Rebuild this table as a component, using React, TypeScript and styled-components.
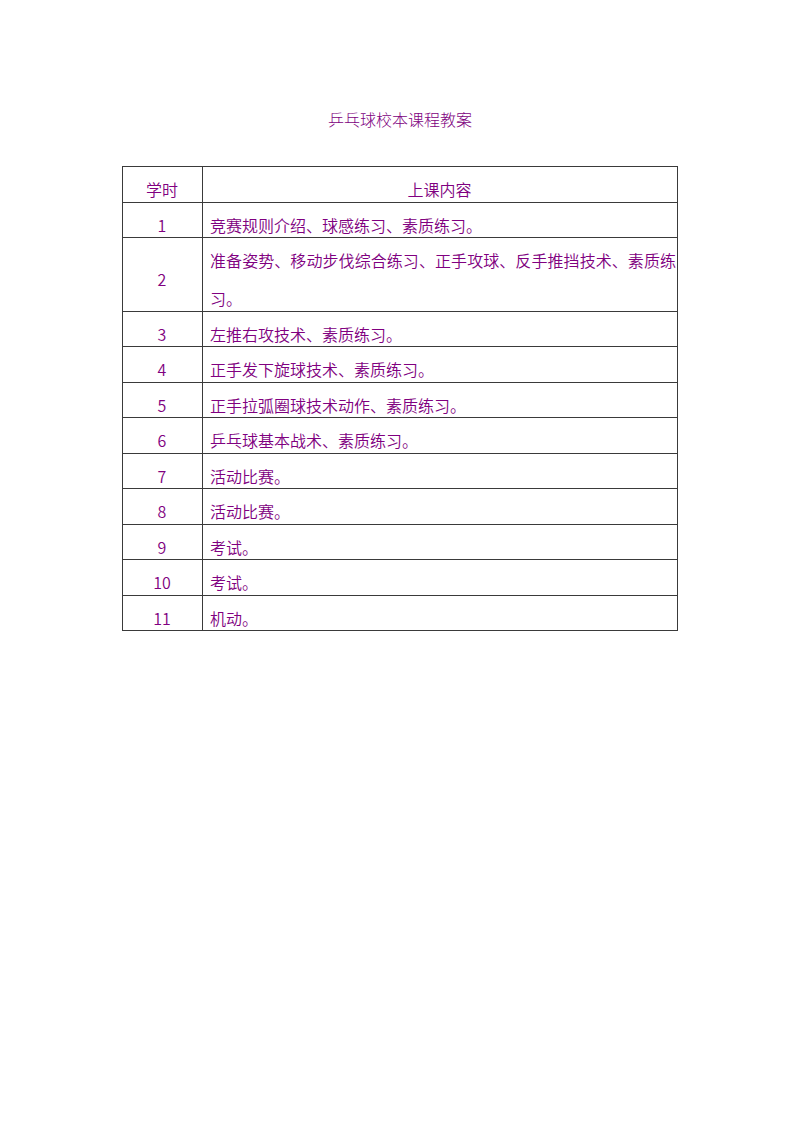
import styled, { createGlobalStyle } from "styled-components";

const GlobalStyle = createGlobalStyle`
  html, body {
    margin: 0;
    padding: 0;
    background: #fff;
  }
  body {
    font-family: "Noto Sans CJK SC", "Noto Sans", sans-serif;
    color: #800080;
  }
`;

const Page = styled.div`
  width: 800px;
  min-height: 1130px;
  padding-top: 107px;
  box-sizing: border-box;
`;

const Title = styled.h1`
  margin: 0 0 35px;
  font-size: 16px;
  font-weight: 300;
  line-height: 24px;
  text-align: center;
  color: #800080;
`;

const Table = styled.table`
  width: 556px;
  margin: 0 auto;
  border-collapse: collapse;
  table-layout: fixed;
  border: 1.5px solid #3a3a3a;
`;

const Cell = styled.td<{ $center?: boolean }>`
  border: 1px solid #3a3a3a;
  padding: 0 1px 0 ${(p) => (p.$center ? "0" : "7px")};
  text-align: ${(p) => (p.$center ? "center" : "justify")};
  vertical-align: ${(p) => (p.$center ? "middle" : "top")};
  font-size: 16px;
  font-weight: 350;
  color: #800080;
`;

const Lines = styled.div`
  line-height: 38px;
  padding-top: 3px;
  margin-bottom: -6.5px;
`;

const rows: [string, string][] = [
  ["1", "竞赛规则介绍、球感练习、素质练习。"],
  ["2", "准备姿势、移动步伐综合练习、正手攻球、反手推挡技术、素质练习。"],
  ["3", "左推右攻技术、素质练习。"],
  ["4", "正手发下旋球技术、素质练习。"],
  ["5", "正手拉弧圈球技术动作、素质练习。"],
  ["6", "乒乓球基本战术、素质练习。"],
  ["7", "活动比赛。"],
  ["8", "活动比赛。"],
  ["9", "考试。"],
  ["10", "考试。"],
  ["11", "机动。"],
];

export default function App() {
  return (
    <Page>
      <GlobalStyle />
      <Title>乒乓球校本课程教案</Title>
      <Table>
        <colgroup>
          <col style={{ width: 80 }} />
          <col />
        </colgroup>
        <tbody>
          <tr>
            <Cell $center>
              <Lines>学时</Lines>
            </Cell>
            <Cell $center>
              <Lines>上课内容</Lines>
            </Cell>
          </tr>
          {rows.map(([n, text]) => (
            <tr key={n}>
              <Cell $center>
                <Lines>{n}</Lines>
              </Cell>
              <Cell>
                <Lines>{text}</Lines>
              </Cell>
            </tr>
          ))}
        </tbody>
      </Table>
    </Page>
  );
}
